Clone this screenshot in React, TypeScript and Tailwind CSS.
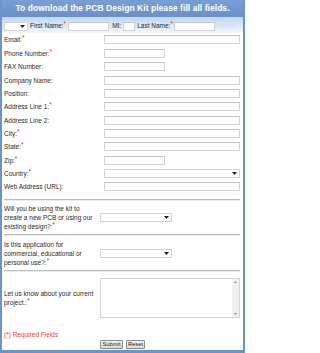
import React from "react";

const Req = () => <span className="text-[#e8262a] align-top leading-none">*</span>;

const Box = ({ w, h = "h-[9px]" }: { w: string; h?: string }) => (
  <div className={`${w} ${h} border border-[#d3d3d3] border-t-[#c4c4c4] bg-white`} />
);

const Arrow = () => (
  <svg width="5" height="3" viewBox="0 0 5 3" className="block">
    <path d="M0 0H5L2.5 3Z" fill="#222" />
  </svg>
);

const Sel = ({ w }: { w: string }) => (
  <div className={`${w} h-[9px] border border-[#d3d3d3] bg-white flex items-center justify-end pr-[2px]`}>
    <Arrow />
  </div>
);

const Row = ({ label, req, w, sel }: { label: string; req?: boolean; w: string; sel?: boolean }) => (
  <div className="flex h-[13.36px] items-center">
    <div className="w-[100px] shrink-0">
      {label}
      {req && <Req />}
    </div>
    {sel ? <Sel w={w} /> : <Box w={w} />}
  </div>
);

const Hr = () => <div className="h-[2px] border-t border-t-[#bdbdbd] border-b border-b-[#ececec] w-[236px]" />;

export default function App() {
  return (
    <div
      className="w-[245px] h-[353px] overflow-hidden bg-white border-x-2 border-b-[3px] border-[#6d93cb] text-[#2a2a2a] text-[6.5px] leading-[9px]"
      style={{ fontFamily: '"Liberation Sans", Arial, sans-serif' }}
    >
      <div className="h-[17px] bg-gradient-to-b from-[#7a9ed4] to-[#6890c9] text-white font-bold text-[8.5px] flex items-center justify-center tracking-[0.05px]">
        To download the PCB Design Kit please fill all fields.
      </div>
      <div className="h-[16.3px] bg-gradient-to-b from-[#c4d5ee] to-[#f3f7fc] flex items-end pb-[2px] px-[2px] whitespace-nowrap">
        <Sel w="w-[24px]" />
        <span className="ml-[2px] mr-[2px] self-center mt-[3px]">
          First Name:<Req />
        </span>
        <Box w="w-[41px]" />
        <span className="ml-[3px] mr-[2px] self-center mt-[3px]">MI:</span>
        <Box w="w-[12px]" />
        <span className="ml-[2px] mr-[1px] self-center mt-[3px]">
          Last Name:<Req />
        </span>
        <Box w="w-[41px]" />
        <span className="ml-[3px] self-center mt-[3px] text-[#d3def0]">Suffix:</span>
      </div>
      <div className="px-[2px]">
        <Row label="Email:" req w="w-[136px]" />
        <Row label="Phone Number:" req w="w-[61px]" />
        <Row label="FAX Number:" w="w-[61px]" />
        <Row label="Company Name:" w="w-[136px]" />
        <Row label="Position:" w="w-[136px]" />
        <Row label="Address Line 1:" req w="w-[136px]" />
        <Row label="Address Line 2:" w="w-[136px]" />
        <Row label="City:" req w="w-[136px]" />
        <Row label="State:" req w="w-[136px]" />
        <Row label="Zip:" req w="w-[61px]" />
        <Row label="Country:" req w="w-[136px]" sel />
        <Row label="Web Address (URL):" w="w-[136px]" />
        <div className="mt-[5px]">
          <Hr />
        </div>
        <div className="h-[33.4px] flex items-center">
          <div className="w-[96px] shrink-0">
            Will you be using the kit to
            <br />
            create a new PCB or using our
            <br />
            existing design?:<Req />
          </div>
          <Sel w="w-[72px]" />
        </div>
        <Hr />
        <div className="h-[34px] flex items-center">
          <div className="w-[96px] shrink-0">
            Is this application for
            <br />
            commercial, educational or
            <br />
            personal use?:<Req />
          </div>
          <Sel w="w-[72px]" />
        </div>
        <Hr />
        <div className="flex items-center pt-[6px]">
          <div className="w-[96px] shrink-0">
            Let us know about your current
            <br />
            project.:<Req />
          </div>
          <div className="w-[140px] h-[40px] border border-[#d3d3d3] bg-white flex justify-end">
            <div className="w-[7px] h-full bg-[#f1f1f1] flex flex-col items-center justify-between py-[2px]">
              <svg width="3" height="2" viewBox="0 0 3 2" className="block">
                <path d="M0 2H3L1.5 0Z" fill="#888" />
              </svg>
              <svg width="3" height="2" viewBox="0 0 3 2" className="block">
                <path d="M0 0H3L1.5 2Z" fill="#888" />
              </svg>
            </div>
          </div>
        </div>
        <div className="mt-[13px] text-[#f03a3a] h-[8px] leading-[8px]">(*) Required Fields</div>
        <div className="flex justify-center gap-[3px] mt-[1px]">
          <div className="w-[23px] h-[9px] border border-[#8a8a8a] rounded-[1px] bg-gradient-to-b from-[#f4f4f4] to-[#dcdcdc] text-[5.8px] leading-[7px] text-[#222] flex items-center justify-center">
            Submit
          </div>
          <div className="w-[19px] h-[9px] border border-[#8a8a8a] rounded-[1px] bg-gradient-to-b from-[#f4f4f4] to-[#dcdcdc] text-[5.8px] leading-[7px] text-[#222] flex items-center justify-center">
            Reset
          </div>
        </div>
      </div>
    </div>
  );
}
